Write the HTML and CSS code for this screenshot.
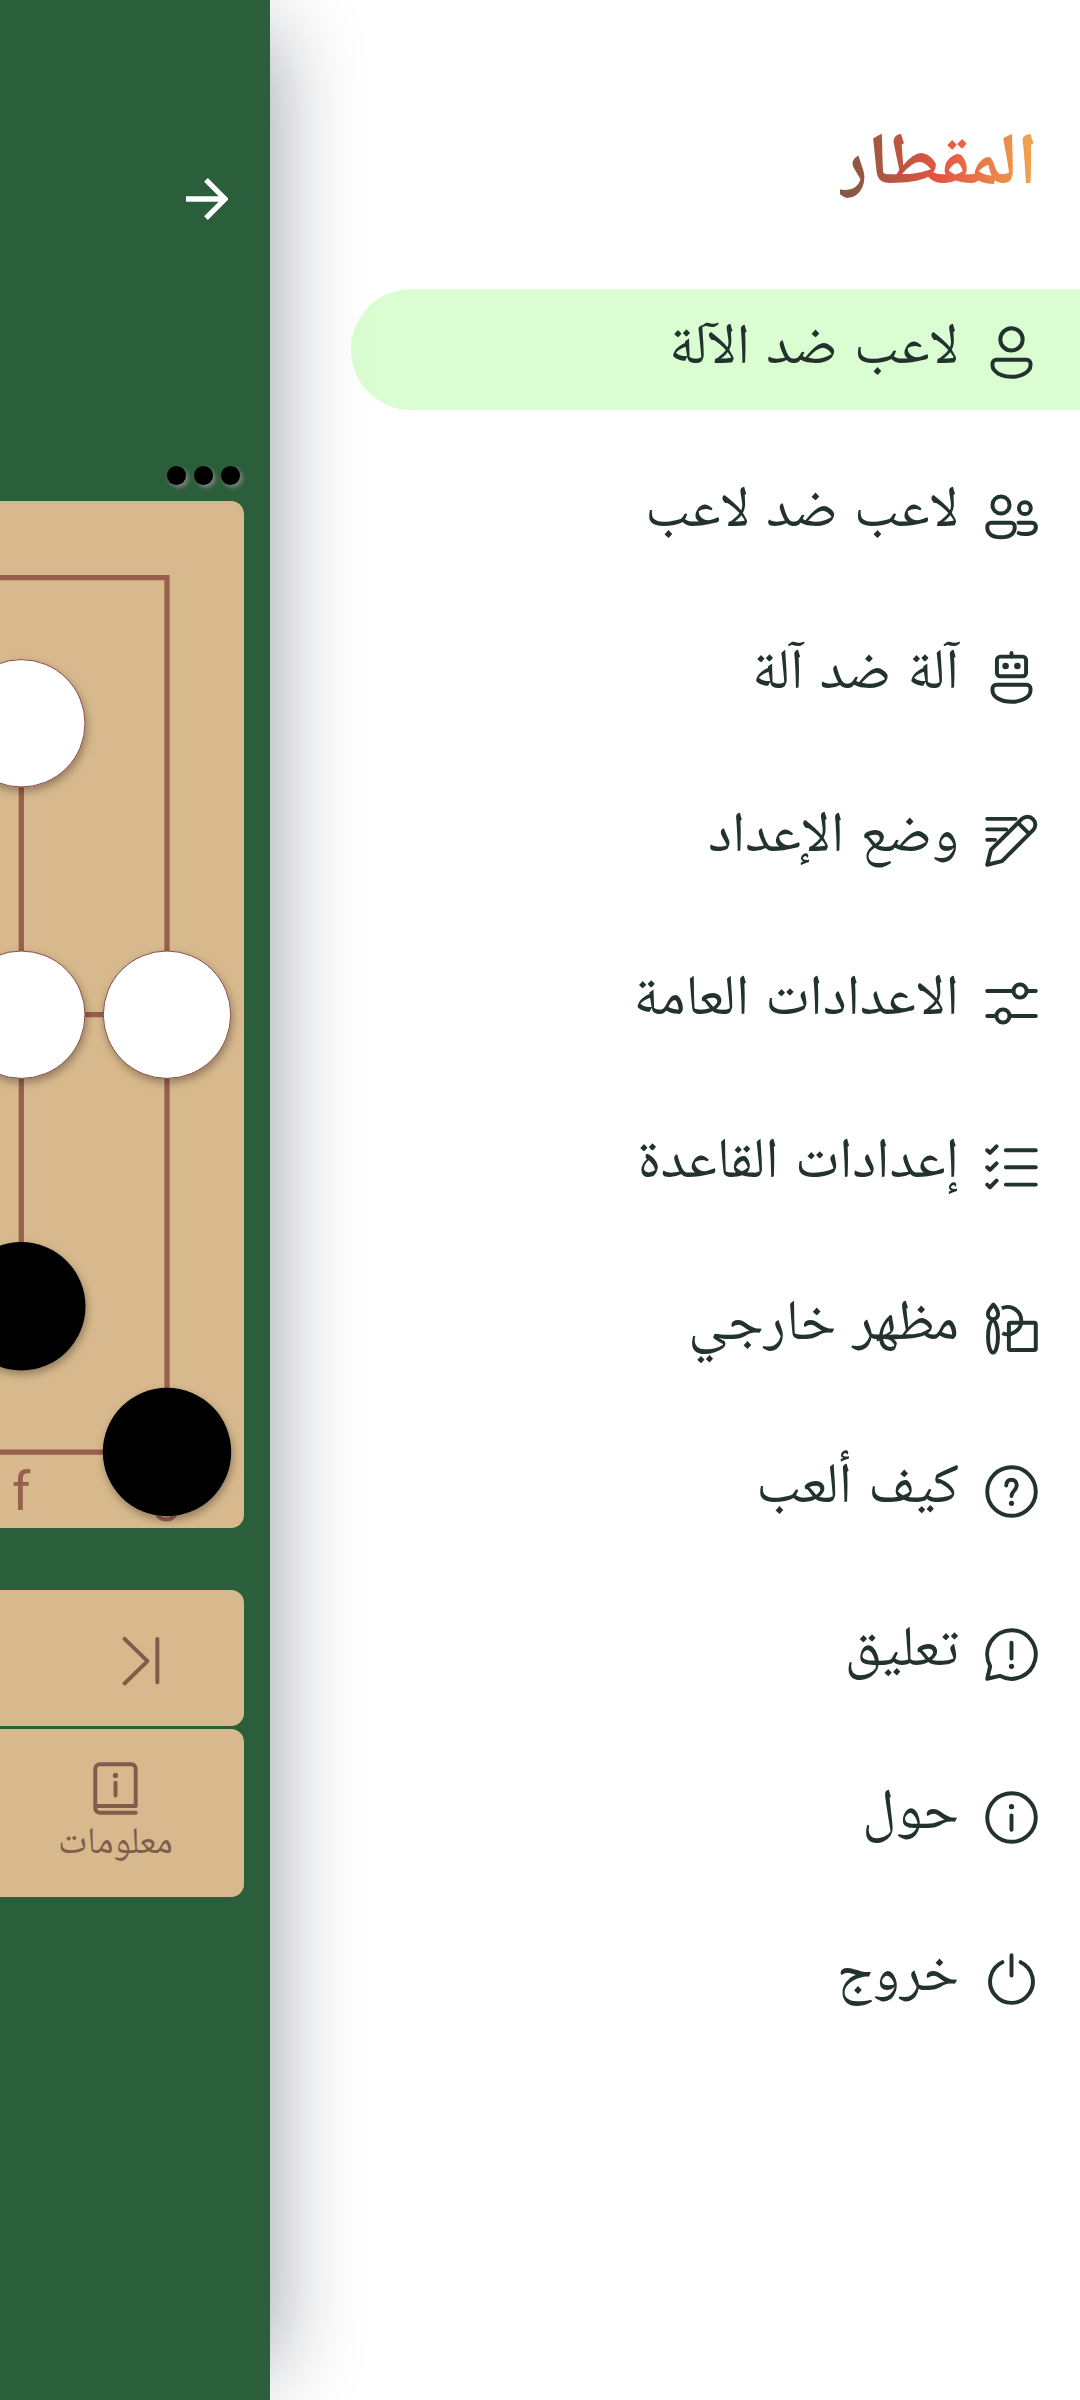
FILE: index.html
```html
<!DOCTYPE html>
<html lang="ar">
<head>
<meta charset="utf-8">
<title>المقطار</title>
<link rel="stylesheet" href="styles.css">
</head>
<body>
<main class="screen">
  <div class="screen-content">
    <svg class="back" viewBox="0 0 42 42"><path d="M0 21h38M20 1.9 39.100 21 20 40.100"/></svg>
    <div class="captured"><i></i><i></i><i></i></div>
    <div class="board">
      <svg viewBox="0 0 244 1028" width="244" height="1028">
        <defs>
          <filter id="drop" x="-20%" y="-20%" width="140%" height="150%"><feDropShadow dx="1.500" dy="4" stdDeviation="4" flood-color="#000" flood-opacity=".32"/></filter>
        </defs>
        <g class="lines">
          <path d="M-10 76.500H167V951H-10M21.300 222V806M21.300 513.700H167"/>
        </g>
        <text class="coord" x="21.300" y="1009" text-anchor="middle">f</text>
        <text class="coord" x="167" y="1009" text-anchor="middle">g</text>
        <g filter="url(#drop)">
          <circle class="white" cx="21.300" cy="222.300" r="63.700"/>
          <circle class="white" cx="21.300" cy="513.700" r="63.700"/>
          <circle class="white" cx="167" cy="513.700" r="63.700"/>
          <circle cx="21.300" cy="805.300" r="64.200"/>
          <circle cx="167" cy="951" r="64.200"/>
        </g>
      </svg>
    </div>
    <div class="bar history">
      <svg class="icon" viewBox="0 0 24 24"><path d="M3.250 3.750 12 12.250 3.250 20.750M15.750 3.750v16.500"/></svg>
    </div>
    <div class="bar actions">
      <div class="action">
        <svg class="icon" viewBox="0 0 24 24"><path d="M19.700 18.650H4.750M19.700 21.250H6a1.700 1.700 0 0 1-1.700-1.700V4.500A1.700 1.700 0 0 1 6 2.750h12a1.700 1.700 0 0 1 1.700 1.750v14.150M12 9.800v4.900"/><circle class="dot" cx="12" cy="7" r="1"/></svg>
        <span>معلومات</span>
      </div>
    </div>
  </div>
</main>
<nav class="drawer" dir="rtl">
  <h1 class="title">المقطار</h1>
  <ul class="menu">
    <li class="item active">
      <svg class="icon" viewBox="0 0 24 24"><circle cx="12" cy="7" r="4.250"/><path d="M6.250 14.750h11.500a1.500 1.500 0 0 1 1.500 1.500v.58c0 .7-.25 1.400-.72 1.950-1.400 1.630-3.560 2.470-6.530 2.470s-5.130-.84-6.530-2.470a3 3 0 0 1-.72-1.950v-.58a1.500 1.500 0 0 1 1.500-1.500z"/></svg>
      <span>لاعب ضد الآلة</span>
    </li>
    <li class="item">
      <svg class="icon" viewBox="0 0 24 24"><circle cx="8" cy="8" r="3.250"/><circle cx="17.100" cy="9.200" r="2.250"/><path d="M4.250 14.750h7.500a1.500 1.500 0 0 1 1.500 1.500c0 2.900-2.200 4-5.250 4s-5.250-1.100-5.250-4a1.500 1.500 0 0 1 1.500-1.500zM14.700 14.750h5.100a1.500 1.500 0 0 1 1.500 1.500c0 1.900-1.600 2.800-4.200 2.800-.9 0-1.700-.1-2.350-.4"/></svg>
      <span>لاعب ضد لاعب</span>
    </li>
    <li class="item">
      <svg class="icon" viewBox="0 0 24 24"><rect x="6.450" y="4.050" width="11.100" height="7.500" rx="1.300"/><path d="M12 2.700V4M6.250 14.750h11.500a1.500 1.500 0 0 1 1.500 1.500v.58c0 2.600-3.200 4.420-7.250 4.420s-7.250-1.820-7.250-4.420v-.58a1.500 1.500 0 0 1 1.500-1.500z"/><circle class="dot" cx="9.750" cy="7.650" r="1.250"/><circle class="dot" cx="14.250" cy="7.650" r="1.250"/></svg>
      <span>آلة ضد آلة</span>
    </li>
    <li class="item">
      <svg class="icon" viewBox="0 0 24 24"><path d="M2.750 21.250 4.150 15.600 16.050 3.700a3.010 3.010 0 0 1 4.250 4.250L8.400 19.850zM14.500 5.250l4.250 4.250M2.750 3.750h10.800M2.750 7.750h7.200M2.750 11.750h3"/></svg>
      <span>وضع الإعداد</span>
    </li>
    <li class="item">
      <svg class="icon" viewBox="0 0 24 24"><path d="M2.750 7.250h10M18 7.250h3.250M2.750 16.750H6M11.500 16.750h9.750"/><circle cx="15.250" cy="7.250" r="2.500"/><circle cx="8.750" cy="16.750" r="2.500"/></svg>
      <span>الاعدادات العامة</span>
    </li>
    <li class="item">
      <svg class="icon" viewBox="0 0 24 24"><path d="M9.850 5.800h11.400M9.850 12.300h11.400M9.850 18.900h11.400M2.750 5.800l1.050 1L6.300 4.300M2.750 12.300l1.050 1 2.500-2.500M2.750 18.900l1.050 1 2.500-2.500"/></svg>
      <span>إعدادات القاعدة</span>
    </li>
    <li class="item">
      <svg class="icon" viewBox="0 0 24 24"><rect x="11" y="9.800" width="10.250" height="10.400" rx=".6"/><path class="butt" d="M8.300 4.300a5.200 5.200 0 1 1 .2 9.500"/><path d="M5.100 2.900C4.200 4 3 5.100 3 6.500a1.950 1.950 0 0 0 3.900 0C6.900 5.100 6 3.900 5.100 2.900z"/><ellipse cx="4.950" cy="15.100" rx="1.900" ry="6.100"/></svg>
      <span>مظهر خارجي</span>
    </li>
    <li class="item">
      <svg class="icon" viewBox="0 0 24 24"><circle cx="12" cy="12" r="9.250"/><path d="M10 9.700c0-1.400.8-2.200 2-2.200s2 .9 2 2.100c0 2-2 2.200-2 4.100"/><circle class="dot" cx="12" cy="16.500" r="1"/></svg>
      <span>كيف ألعب</span>
    </li>
    <li class="item">
      <svg class="icon" viewBox="0 0 24 24"><path d="M12 2.750a9.250 9.250 0 1 1-4.450 17.370L2.750 21.250 3.880 16.450A9.250 9.250 0 0 1 12 2.750zM12 7.500v6"/><circle class="dot" cx="12" cy="16.500" r="1"/></svg>
      <span>تعليق</span>
    </li>
    <li class="item">
      <svg class="icon" viewBox="0 0 24 24"><circle cx="12" cy="12" r="9.250"/><path d="M12 11.200v5.500"/><circle class="dot" cx="12" cy="7.900" r="1"/></svg>
      <span>حول</span>
    </li>
    <li class="item">
      <svg class="icon" viewBox="0 0 24 24"><path d="M8.500 5.400a8.150 8.150 0 1 0 7 0M12 2.750v7.750"/></svg>
      <span>خروج</span>
    </li>
  </ul>
</nav>
</body>
</html>
```
FILE: styles.css
```css
* { box-sizing: border-box; }

body {
  margin: 0;
  height: 2400px;
  display: flex;
  background: #fff;
  overflow: hidden;
  font-family: "Noto Naskh Arabic", "DejaVu Sans", sans-serif;
}

.screen {
  position: relative;
  z-index: 1;
  flex: none;
  width: 270px;
}

.screen::before {
  content: "";
  position: absolute;
  inset: 31px 0 31px -200px;
  box-shadow: 0 0 84px rgba(10, 14, 28, .42);
}

.screen-content {
  position: relative;
  height: 100%;
  padding-top: 178px;
  background: #2b5e3a;
  overflow: hidden;
}

.back {
  display: block;
  width: 42px;
  height: 42px;
  margin-left: 186px;
  fill: none;
  stroke: #fff;
  stroke-width: 5.300;
}

.captured {
  display: flex;
  justify-content: flex-end;
  gap: 8.100px;
  margin-top: 246px;
  padding-right: 30.400px;
}

.captured i {
  width: 18.700px;
  height: 18.700px;
  border-radius: 50%;
  background: #000;
  box-shadow: 2.500px 2.500px 4px #808080;
}

.board,
.bar {
  width: 243.500px;
  background: #d8b98d;
}

.board {
  height: 1027.500px;
  margin-top: 16.100px;
  border-radius: 0 13px 13px 0;
  overflow: hidden;
}

.board svg { display: block; }

.lines {
  fill: none;
  stroke: #98604c;
  stroke-width: 5.250;
}

.coord {
  font: 53px Roboto, sans-serif;
  fill: #98604c;
}

.white {
  fill: #fff;
  stroke: #8a4a42;
  stroke-width: 1;
}

.icon {
  display: block;
  flex: none;
  width: 63px;
  height: 63px;
  fill: none;
  stroke: currentColor;
  stroke-width: 1.500;
  stroke-linecap: round;
  stroke-linejoin: round;
}

.icon .dot { fill: currentColor; stroke: none; }
.icon .butt { stroke-linecap: butt; }

.bar {
  color: #7f5d4a;
  border-radius: 0 13px 13px 0;
}

.history {
  display: flex;
  height: 136.500px;
  margin-top: 61.500px;
  padding: 39px 0 0 116px;
}

.actions {
  height: 168px;
  margin-top: 2.500px;
  padding-top: 28.500px;
}

.action {
  width: 231px;
  display: flex;
  flex-direction: column;
  align-items: center;
}

.action span {
  font-size: 37.500px;
  line-height: 60px;
  margin-top: -5.500px;
}

.drawer {
  flex: 1;
  padding-top: 110px;
  color: #22332d;
}

.title {
  width: max-content;
  margin: 0 42px 0 0;
  font-size: 73.500px;
  line-height: 116px;
  font-weight: 700;
  background: linear-gradient(to left, #f0a850, #e65340 50%, #7d5a42);
  -webkit-background-clip: text;
  background-clip: text;
  color: transparent;
}

.menu {
  display: flex;
  flex-direction: column;
  gap: 42px;
  margin: 63px 0 0;
  padding: 0;
  list-style: none;
}

.item {
  display: flex;
  align-items: center;
  gap: 21px;
  height: 120.750px;
  margin-left: 81px;
  padding-right: 37px;
  border-radius: 60.400px 0 0 60.400px;
  font-size: 57px;
  line-height: 118px;
  word-spacing: 3.500px;
  white-space: nowrap;
}

.item .icon { margin-top: 6px; }
.item span { padding-top: 3px; }
.active { background: #dafdd2; }
```
